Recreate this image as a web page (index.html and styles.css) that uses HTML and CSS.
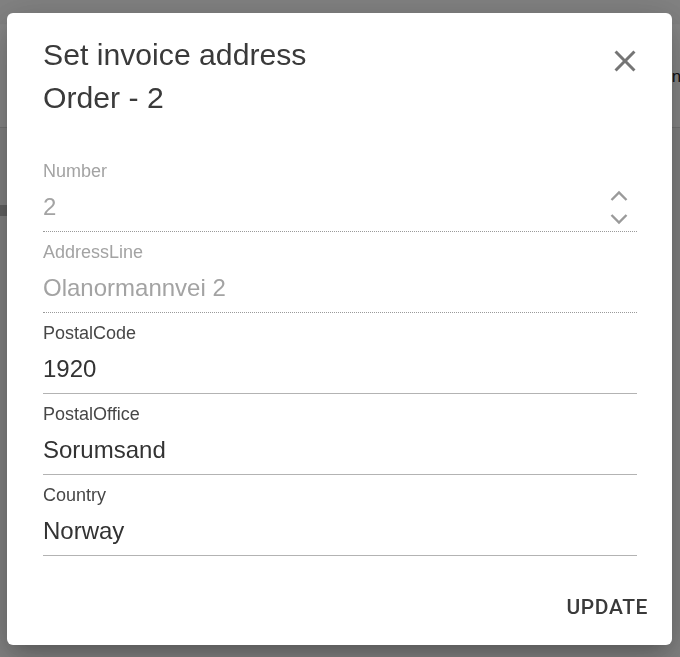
FILE: index.html
```html
<!DOCTYPE html>
<html lang="en">
<head>
<meta charset="utf-8">
<title>Set invoice address</title>
<link rel="stylesheet" href="styles.css">
</head>
<body>
<div class="page">
  <header class="topbar"><span class="topbar-text">in</span></header>
  <div class="page-row"></div>
</div>
<div class="backdrop">
  <div class="dialog" role="dialog" aria-labelledby="dlg-title">
    <button class="close" type="button" aria-label="Close">
      <svg viewBox="0 0 24 24" width="36" height="36"><path d="M19 6.41 17.59 5 12 10.59 6.41 5 5 6.41 10.59 12 5 17.59 6.41 19 12 13.41 17.59 19 19 17.59 13.41 12z"/></svg>
    </button>
    <h2 class="title" id="dlg-title">Set invoice address<br>Order - 2</h2>
    <div class="fields">
      <div class="field field-disabled">
        <div class="label">Number</div>
        <div class="value-row">
          <div class="value">2</div>
          <svg class="spinner" viewBox="0 0 18 36" width="18" height="36"><polyline points="1.5,11 9,3.5 16.5,11"/><polyline points="1.5,26 9,33.5 16.5,26"/></svg>
        </div>
      </div>
      <div class="field field-disabled">
        <div class="label">AddressLine</div>
        <div class="value-row"><div class="value">Olanormannvei 2</div></div>
      </div>
      <div class="field">
        <div class="label">PostalCode</div>
        <div class="value-row"><div class="value">1920</div></div>
      </div>
      <div class="field">
        <div class="label">PostalOffice</div>
        <div class="value-row"><div class="value">Sorumsand</div></div>
      </div>
      <div class="field">
        <div class="label">Country</div>
        <div class="value-row"><div class="value">Norway</div></div>
      </div>
    </div>
    <div class="actions">
      <button class="btn" type="button">UPDATE</button>
    </div>
  </div>
</div>
</body>
</html>
```
FILE: styles.css
```css
html, body {
  margin: 0;
  padding: 0;
}
body {
  background: #f5f5f5;
  font-family: "Liberation Sans", Arial, sans-serif;
  width: 680px;
  height: 657px;
  overflow: hidden;
}
.page {
  height: 657px;
}
.topbar {
  height: 104px;
  margin-top: 24px;
  border-top: 1px solid #fdfdfd;
  border-bottom: 1px solid #dcdcdc;
  background: #ffffff;
  display: flex;
  align-items: flex-start;
  padding-left: 668px;
  box-sizing: border-box;
  padding-top: 42px;
  overflow: hidden;
  white-space: nowrap;
}
.topbar-text {
  font-size: 17px;
  color: #222;
  line-height: 20px;
}
.page-row {
  margin-top: 77px;
  height: 11px;
  background: #b8b8b8;
  width: 40px;
}
.backdrop {
  position: fixed;
  inset: 0;
  background: rgba(0, 0, 0, 0.47);
  display: flex;
  align-items: center;
  justify-content: center;
  padding-right: 1px;
}
.dialog {
  position: relative;
  width: 665px;
  box-sizing: border-box;
  background: #fff;
  border-radius: 6px;
  box-shadow: 0 16px 36px 3px rgba(0,0,0,0.14), 0 6px 44px 6px rgba(0,0,0,0.12), 0 8px 15px -7px rgba(0,0,0,0.2);
}
.close {
  position: absolute;
  top: 30px;
  right: 29px;
  width: 36px;
  height: 36px;
  padding: 0;
  border: 0;
  background: none;
  cursor: pointer;
}
.close svg {
  display: block;
  fill: #757575;
}
.title {
  margin: 0;
  padding: 20px 36px 0;
  font-family: "Liberation Sans", Arial, sans-serif;
  font-weight: 400;
  font-size: 30.2px;
  line-height: 43px;
  color: #3a3a3a;
}
.fields {
  margin-top: 42px;
  padding: 0 35px 0 36px;
  display: flex;
  flex-direction: column;
  gap: 10px;
}
.field {
  display: flex;
  flex-direction: column;
  border-bottom: 1px solid #b3b3b3;
}
.label {
  font-size: 18px;
  line-height: 20px;
  color: #474747;
  margin-bottom: 12px;
}
.value-row {
  display: flex;
  align-items: center;
  height: 28px;
  padding-bottom: 10px;
}
.value {
  flex: 1;
  font-size: 24px;
  line-height: 28px;
  color: #333;
}
.field-disabled {
  border-bottom: 1px dotted #9a9a9a;
}
.field-disabled .label,
.field-disabled .value {
  color: #a3a3a3;
}
.spinner {
  margin: -4px 9px -4px 0;
  fill: none;
  stroke: #9a9a9a;
  stroke-width: 2.4;
}
.actions {
  display: flex;
  justify-content: flex-end;
  padding: 24px 12px 10px;
}
.btn {
  font-family: Roboto, "Liberation Sans", sans-serif;
  font-weight: 500;
  font-size: 21px;
  line-height: 37px;
  letter-spacing: 0.6px;
  padding: 9px 12px;
  border: 0;
  background: none;
  color: #3a3a3a;
  border-radius: 6px;
  cursor: pointer;
}
```
